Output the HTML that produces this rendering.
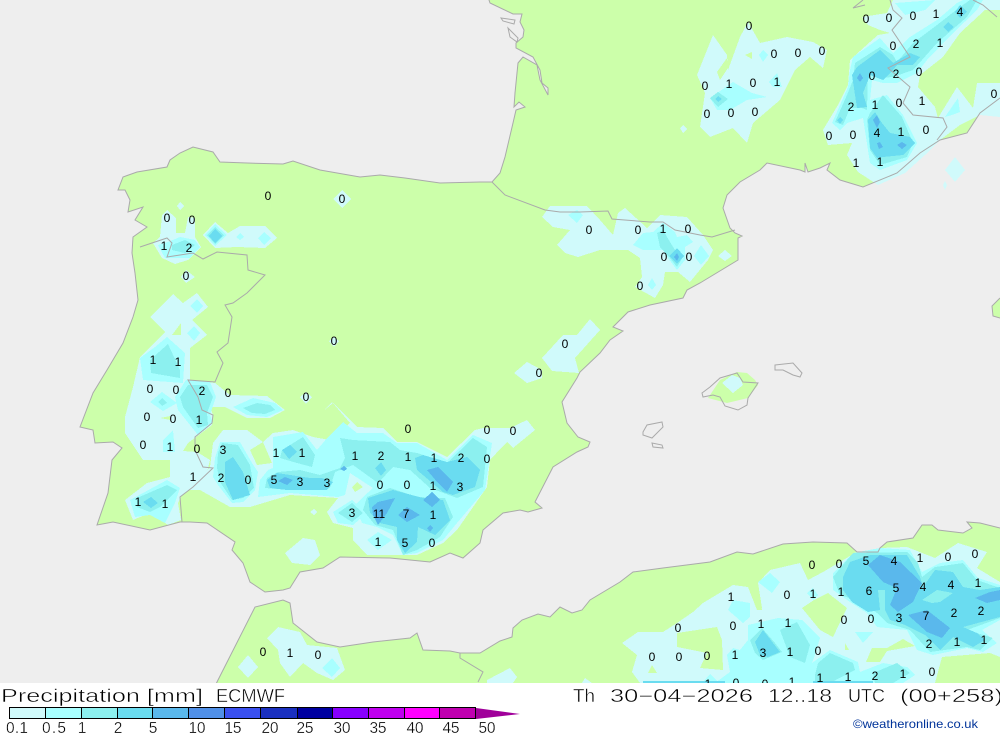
<!DOCTYPE html>
<html><head><meta charset="utf-8"><title>Precipitation</title>
<style>
html,body{margin:0;padding:0;background:#fff;width:1000px;height:733px;overflow:hidden}
svg{display:block}
.a{fill:#d0fafb}.b{fill:#a8ffff}.c{fill:#8cf0ef}.d{fill:#6adcf0}.e{fill:#5ab8ec}.f{fill:#5090e8}.g{fill:#ccffaa}
.n text{font:12px "Liberation Sans",sans-serif;fill:#000;text-anchor:middle}
.t{font-family:"Liberation Sans",sans-serif;font-size:18px;fill:#000;stroke:#fff;stroke-width:.45}
.l{font-family:"Liberation Sans",sans-serif;font-size:15.5px;fill:#000;text-anchor:middle;stroke:#fff;stroke-width:.3}
.ln{fill:none;stroke:#aaa;stroke-width:1}
</style></head><body>
<svg width="1000" height="733" viewBox="0 0 1000 733" xmlns="http://www.w3.org/2000/svg">
<defs><path id="cst" d="M-5,-5L489,-5 489,0 490,3 513,14 522,14 520,22 524,30 523,37 516,43 516,48 533,57 540,70 542,83 548,88 548,95 540,80 537,65 523,57 518,63 515,93 514,107 519,102 525,107 516,110 513,123 505,157 500,173 492,182 480,182 440,183 405,178 380,175 360,177 320,170 293,161 283,164 247,163 220,162 213,152 193,147 180,153 170,160 167,167 137,172 123,177 118,190 125,190 130,200 128,212 143,207 135,220 147,227 133,237 132,253 135,273 138,300 133,317 123,343 107,370 93,393 80,427 93,430 95,443 113,442 122,448 112,460 108,493 97,525 113,522 150,530 180,522 190,522 207,523 235,542 232,550 243,563 250,582 265,592 283,590 290,588 300,572 323,568 340,557 390,558 430,562 450,553 463,558 480,543 483,530 503,513 520,510 528,512 542,508 535,502 553,467 577,452 588,447 590,442 578,437 567,423 562,402 577,378 580,372 600,353 610,340 623,331 613,327 628,312 650,305 683,298 687,290 700,283 738,260 738,238 742,236 735,233 730,228 723,208 727,195 740,182 760,170 767,163 800,170 805,172 805,163 808,172 820,168 830,163 827,170 840,180 863,187 897,173 920,153 940,140 967,133 980,113 1000,98 1005,98 1005,528 1000,528 980,523 967,522 972,528 963,533 938,530 932,525 922,525 913,538 887,542 880,548 878,552 857,552 847,543 813,542 783,544 753,554 737,552 710,562 663,568 633,572 620,582 590,600 582,610 572,613 560,607 550,617 538,614 522,620 513,628 512,637 500,641 480,653 460,653 450,651 423,650 417,633 410,638 373,642 340,647 317,642 293,623 290,603 283,600 255,607 218,680 213,690 -5,690Z"/></defs>
<rect width="1000" height="733" fill="#ccffaa"/>
<use href="#cst" fill="#eeeeee"/>
<polygon fill="#ccffaa" points="708,398 720,380 737,372 747,373 755,380 758,385 748,398 727,403"/>
<polygon fill="#ccffaa" points="1000,298 992,306 993,316 1000,318"/>
<g shape-rendering="crispEdges">
<g class="a">
<polygon points="162,215 167,210 176,218 176,233 185,233 188,217 195,218 195,237 201,247 188,260 175,264 162,258 153,243 160,237"/>
<polygon points="180,202 184,206 180,210 177,206"/>
<polygon points="215,222 228,233 240,226 265,226 277,238 265,248 237,247 215,248 203,235"/>
<polygon points="186,270 195,277 186,283 181,277"/>
<polygon points="342,190 351,199 342,208 333,199"/>
<polygon points="334,337 339,341 334,347 329,341"/>
<polygon points="306,392 312,397 306,404 300,397"/>
<polygon points="173,294 183,303 197,293 208,307 192,320 207,335 190,348 190,380 215,383 230,395 267,396 285,410 270,418 247,418 225,407 210,407 213,415 212,425 188,443 183,451 197,452 210,460 205,480 193,487 182,495 178,503 181,520 168,525 150,513 133,520 125,500 147,483 170,477 170,460 143,460 125,433 125,417 133,387 140,357 165,332 150,317"/>
<polygon points="322,412 333,403 357,427 383,428 397,442 417,442 447,457 475,430 483,428 510,428 527,420 535,430 513,448 507,442 502,447 490,460 487,487 457,530 443,543 417,555 367,555 353,540 353,528 333,523 327,512 338,498 290,495 250,507 230,507 200,490 190,490 210,467 213,443 223,430 247,430 263,442 273,433 293,430 313,437 330,440 350,423 332,402"/>
<polygon points="285,553 303,538 315,540 320,555 310,565 292,563"/>
<polygon points="310,512 314,509 317,512 314,515"/>
<polygon points="267,638 278,627 300,632 307,645 337,648 345,670 333,680 317,673 303,663 290,677 280,663 278,650"/>
<polygon points="248,655 258,667 248,678 238,667"/>
<polygon points="487,680 510,668 517,677 513,683 487,683"/>
<polygon points="582,683 585,678 592,683"/>
<polygon points="697,75 713,35 727,55 728,70 740,37 748,22 760,43 787,37 813,42 827,50 823,68 810,57 795,70 780,100 753,123 747,143 733,128 710,137 700,127 705,93"/>
<polygon points="680,128 683,125 687,129 683,133"/>
<polygon points="893,0 1000,0 1000,10 985,10 960,33 943,57 920,75 918,87 935,107 938,118 957,87 973,108 977,83 1000,83 1000,117 980,115 960,125 940,140 925,155 905,173 878,185 858,172 847,155 852,143 828,145 823,130 838,105 848,85 850,60 870,42 878,35 890,33 880,30 868,25 862,17 887,13"/>
<polygon points="945,170 955,157 965,170 955,182"/>
<polygon points="943,185 945,181 947,185 945,190"/>
<polygon points="542,217 550,206 587,206 600,220 613,235 618,213 625,208 647,228 660,215 687,217 703,235 713,250 708,260 690,282 678,272 665,272 663,285 655,298 635,287 642,277 640,258 628,250 600,250 578,257 565,253 557,245 570,230 553,227"/>
<polygon points="718,256 725,250 732,256 725,261"/>
<polygon points="542,358 563,335 577,335 590,319 600,330 575,358 579,373 552,371"/>
<polygon points="514,373 527,362 542,370 542,378 527,383"/>
<polygon points="722,383 732,375 740,378 743,385 733,393"/>
<polygon points="622,643 638,632 663,632 677,623 693,612 703,603 733,585 748,587 757,610 762,608 758,583 770,570 800,563 808,580 823,572 855,553 880,548 907,547 935,558 958,543 987,552 977,568 1000,582 1000,683 640,683 632,672 637,655"/>
</g>
<g class="g">
<polygon points="172,335 181,323 181,335"/>
<polygon points="160,418 170,416 170,420"/>
<polygon points="250,450 263,442 272,463 257,465"/>
<polygon points="352,487 357,482 363,487 355,492"/>
<polygon points="717,72 727,58 728,68 720,80"/>
<polygon points="745,55 752,52 752,59"/>
<polygon points="802,608 814,600 828,593 847,608 833,637 820,630"/>
<polygon points="677,633 717,627 722,640 723,670 700,668 707,653 677,647"/>
<polygon points="748,587 757,610 762,610 758,587"/>
<polygon points="866,662 872,648 887,648 903,639 915,646 887,651 880,662"/>
<polygon points="845,643 849,650 845,650"/>
<polygon points="648,673 652,665 657,673"/>
<polygon points="942,657 990,653 1000,657 1000,683 935,683"/>
<polygon points="977,568 987,552 1000,540 1000,582"/>
</g>
<g class="b">
<polygon points="168,242 180,237 195,240 200,247 190,258 165,258 158,245"/>
<polygon points="215,224 227,235 215,246 205,235"/>
<polygon points="264,232 271,238 264,245 258,238"/>
<polygon points="240,233 244,237 240,240 236,237"/>
<polygon points="197,299 203,306 197,313 190,306"/>
<polygon points="194,326 200,333 194,341 187,333"/>
<polygon points="140,358 143,380 183,383 185,353 167,337 155,347"/>
<polygon points="175,397 186,380 210,382 216,397 210,415 213,423 198,435 178,410"/>
<polygon points="150,402 162,392 177,403 163,411"/>
<polygon points="233,407 253,398 275,403 283,410 267,417 247,415"/>
<polygon points="163,440 173,430 175,452 163,452"/>
<polygon points="130,500 167,480 180,488 175,503 165,523 150,515 135,517"/>
<polygon points="215,458 220,442 240,442 252,463 258,472 255,490 243,502 232,503 218,485 213,477"/>
<polygon points="328,437 343,422 357,433 383,433 397,443 417,443 447,460 473,435 492,443 485,490 457,523 443,540 417,553 403,555 393,535 377,527 362,523 355,505 363,497 373,488 350,473 345,495 338,497 290,493 258,497 260,480 268,470 273,468 273,437 303,432 317,450"/>
<polygon points="333,512 352,500 367,513 353,525 338,523"/>
<polygon points="367,540 378,532 392,540 378,550"/>
<polygon points="332,658 340,668 332,677 322,668"/>
<polygon points="710,98 733,82 752,93 767,97 747,100 730,110 717,110"/>
<polygon points="759,55 763,50 768,55 763,62"/>
<polygon points="769,82 777,73 782,87 773,87"/>
<polygon points="853,57 880,38 893,53 910,37 937,20 957,3 963,0 983,0 977,10 953,33 927,60 917,73 897,83 883,83 872,80 870,100 887,95 903,115 917,143 907,160 880,170 870,163 863,118 847,123 840,130 832,123 848,87 850,70"/>
<polygon points="895,3 935,0 925,10 905,15"/>
<polygon points="945,117 958,98 960,112 952,115"/>
<polygon points="633,245 643,233 653,232 663,223 675,232 677,237 687,235 693,242 685,247 685,260 677,270 668,258 663,250 643,250"/>
<polygon points="568,215 577,210 583,215 577,223"/>
<polygon points="694,256 701,245 709,256 701,265"/>
<polygon points="648,285 652,278 656,285 652,290"/>
<polygon points="833,573 853,553 880,548 910,550 922,572 940,563 963,560 978,578 1000,585 1000,620 982,630 997,643 983,652 967,648 933,655 917,650 907,630 877,627 867,613 850,602 833,590"/>
<polygon points="748,625 778,618 802,620 820,638 815,655 812,663 830,650 858,662 860,672 883,663 907,667 915,675 903,683 715,683 730,672 727,655 733,648 740,650 748,640"/>
<polygon points="758,582 770,573 780,582 772,593"/>
<polygon points="807,593 813,588 818,595 813,600"/>
<polygon points="728,610 733,600 750,603 750,617 743,623"/>
<polygon points="855,632 873,632 863,643"/>
<polygon points="703,682 710,674 718,682"/>
</g>
<g class="c">
<polygon points="172,245 185,240 195,245 185,253 172,250"/>
<polygon points="215,227 224,235 215,244 207,235"/>
<polygon points="150,360 151,373 180,378 180,370 168,344"/>
<polygon points="180,397 188,385 207,385 213,397 207,413 208,425 198,428 183,407"/>
<polygon points="158,402 162,398 167,403 162,406"/>
<polygon points="243,408 257,403 270,405 275,410 265,414 252,413"/>
<polygon points="137,498 167,485 177,490 160,507 150,512 137,507"/>
<polygon points="218,453 222,443 238,445 250,465 254,488 243,498 232,500 220,482 217,468"/>
<polygon points="340,438 353,440 390,442 400,450 417,453 447,463 473,438 487,447 483,487 457,498 430,488 410,470 393,467 378,483 353,465 335,472 330,488 290,490 265,488 267,478 278,472 300,470 320,475 340,468 345,458"/>
<polygon points="282,450 303,437 315,455 312,467 297,463 280,458"/>
<polygon points="367,497 390,488 417,497 445,498 453,517 440,537 417,550 403,555 393,530 375,525 363,510"/>
<polygon points="338,513 352,503 363,513 352,522"/>
<polygon points="710,98 718,92 728,99 718,107"/>
<polygon points="855,63 880,47 893,55 897,62 913,43 937,25 960,7 970,0 977,0 967,17 937,43 922,60 913,70 893,77 880,78 868,73 867,110 862,108 850,108 843,125 835,122 847,95 853,80"/>
<polygon points="870,113 883,95 902,117 913,143 907,157 880,165 870,150 867,120"/>
<polygon points="657,233 663,230 670,242 675,250 683,257 677,267 670,258 660,247"/>
<polygon points="833,577 847,560 853,553 907,552 918,563 922,577 935,567 963,563 977,580 1000,588 1000,618 967,630 993,638 980,650 967,647 930,652 910,630 887,623 877,613 862,602 840,595"/>
<polygon points="780,630 797,622 810,645 805,663 790,657"/>
<polygon points="750,640 762,628 775,643 782,652 763,660 755,653"/>
<polygon points="818,663 830,653 853,663 855,670 830,683 815,683 815,675"/>
<polygon points="873,673 897,663 910,673 893,683 875,683"/>
</g>
<g class="d">
<polygon points="143,502 151,497 158,503 151,508"/>
<polygon points="215,229 222,236 215,243 209,236"/>
<polygon points="225,462 233,457 243,472 250,495 233,500 225,482"/>
<polygon points="415,458 423,455 447,462 467,457 480,470 475,487 453,495 443,492 417,470"/>
<polygon points="368,498 393,490 423,498 443,500 450,520 435,535 418,527 417,542 405,553 397,540 397,527 380,523 370,513"/>
<polygon points="267,480 277,473 310,478 322,478 333,482 327,490 287,490 270,488"/>
<polygon points="282,450 290,445 297,452 289,459"/>
<polygon points="375,468 381,462 386,470 381,476"/>
<polygon points="715,99 718,96 722,99 718,102"/>
<polygon points="857,67 880,50 893,63 910,53 920,57 913,65 897,65 893,70 883,80 870,75 863,93 867,107 857,108 855,95 852,75"/>
<polygon points="868,120 875,112 882,123 890,133 910,137 915,143 903,155 883,157 877,158 870,148"/>
<polygon points="837,120 840,117 843,120 840,124"/>
<polygon points="943,27 948,22 954,27 948,32"/>
<polygon points="955,12 960,5 967,12 960,18"/>
<polygon points="669,256 677,248 684,256 677,264"/>
<polygon points="843,577 850,562 870,555 907,555 920,577 923,587 935,570 953,572 963,587 980,590 1000,587 1000,617 963,627 977,633 985,640 973,647 953,637 940,650 925,635 905,625 890,620 885,610 885,590 878,590 880,610 868,612 852,602 843,590"/>
<polygon points="755,642 763,630 780,652 768,657 760,655"/>
<rect x="643" y="681" width="82" height="2"/>
<rect x="813" y="681" width="60" height="2"/>
</g>
<polygon class="c" points="922,600 937,590 953,593 940,602 932,603"/>
<g class="e">
<polygon points="285,477 293,480 287,485 278,481"/>
<polygon points="427,470 438,467 453,482 447,492 438,483"/>
<polygon points="423,500 432,492 440,500 432,507"/>
<polygon points="372,507 378,502 395,498 387,513 378,525 373,515"/>
<polygon points="398,515 407,507 420,515 407,522"/>
<polygon points="430,525 433,528 430,532 427,528"/>
<polygon points="340,469 344,466 347,469 344,471"/>
<polygon points="674,257 677,253 679,257 677,261"/>
<polygon points="857,78 860,73 863,78 860,82"/>
<polygon points="873,120 877,115 880,122 877,128"/>
<polygon points="877,143 880,142 883,147 879,149"/>
<polygon points="897,145 902,142 907,145 902,149"/>
<polygon points="868,565 880,555 900,562 922,583 913,602 898,612 890,605 897,588 883,582"/>
<polygon points="908,615 927,610 950,628 942,638 927,632"/>
<polygon points="975,598 990,592 1000,590 1000,600 987,603"/>
</g>
</g>
<use href="#cst" class="ln"/>
<g class="ln">
<polyline points="140,247 167,238 172,243 167,257 193,253 203,259 217,252 247,255 248,270 265,275 247,293 233,303 225,305 232,317 228,343 217,352 223,363 215,382 188,380 198,397 202,410 213,415 212,423 195,437 195,450 203,467 213,468 193,487 180,497 182,522"/>
<polyline points="492,182 505,195 545,210 560,212 580,212 608,211 612,219 650,222 663,222 675,230 700,235 712,237 735,230"/>
<polyline points="890,0 893,10 902,18 892,30 910,57 888,68 910,87 903,103 913,115 943,118 947,127 937,140"/>
<polyline points="973,0 983,5 997,17"/>
<polyline points="863,0 853,8 865,5"/>
<polyline points="460,653 460,658 483,672 478,682"/>
<polygon points="702,393 710,387 720,378 737,373 743,382 758,383 748,398 747,405 738,410 725,406 720,397 713,395 703,397"/>
<polygon points="775,365 793,363 802,373 800,377 793,375 783,370 775,370"/>
<polygon points="643,432 647,425 662,422 663,427 652,438 643,435"/>
<polygon points="652,443 662,445 663,448 653,447"/>
<polygon points="501,18 515,20 514,24 503,21"/>
<polygon points="508,28 518,38 517,42 510,37"/>
<polyline points="1000,298 992,306 993,316 1000,318"/>
</g>
<g class="n">
<text x="749" y="30">0</text><text x="774" y="58">0</text><text x="798" y="57">0</text><text x="822" y="55">0</text><text x="705" y="90">0</text><text x="729" y="88">1</text><text x="753" y="87">0</text><text x="777" y="86">1</text><text x="707" y="118">0</text><text x="731" y="117">0</text><text x="755" y="116">0</text>
<text x="866" y="23">0</text><text x="889" y="22">0</text><text x="913" y="20">0</text><text x="936" y="18">1</text><text x="960" y="16">4</text><text x="893" y="50">0</text><text x="916" y="48">2</text><text x="940" y="47">1</text><text x="872" y="80">0</text><text x="896" y="78">2</text><text x="919" y="76">0</text><text x="994" y="98">0</text><text x="851" y="111">2</text><text x="875" y="109">1</text><text x="899" y="107">0</text><text x="922" y="105">1</text><text x="829" y="140">0</text><text x="853" y="139">0</text><text x="877" y="137">4</text><text x="901" y="136">1</text><text x="926" y="134">0</text><text x="856" y="167">1</text><text x="880" y="166">1</text>
<text x="268" y="200">0</text><text x="342" y="203">0</text><text x="167" y="222">0</text><text x="192" y="224">0</text><text x="164" y="250">1</text><text x="189" y="252">2</text><text x="186" y="280">0</text><text x="334" y="345">0</text><text x="153" y="364">1</text><text x="178" y="366">1</text><text x="150" y="393">0</text><text x="176" y="394">0</text><text x="202" y="395">2</text><text x="228" y="397">0</text><text x="306" y="401">0</text><text x="147" y="421">0</text><text x="173" y="423">0</text><text x="199" y="424">1</text><text x="143" y="449">0</text><text x="170" y="451">1</text><text x="197" y="453">0</text><text x="223" y="454">3</text><text x="276" y="457">1</text><text x="302" y="457">1</text><text x="408" y="433">0</text><text x="487" y="434">0</text><text x="513" y="435">0</text><text x="355" y="460">1</text><text x="381" y="460">2</text><text x="408" y="461">1</text><text x="434" y="462">1</text><text x="461" y="462">2</text><text x="487" y="463">0</text><text x="193" y="481">1</text><text x="221" y="482">2</text><text x="248" y="484">0</text><text x="274" y="484">5</text><text x="300" y="486">3</text><text x="327" y="487">3</text><text x="380" y="489">0</text><text x="407" y="489">0</text><text x="433" y="490">1</text><text x="460" y="491">3</text><text x="138" y="506">1</text><text x="165" y="508">1</text><text x="352" y="517">3</text><text x="379" y="518">11</text><text x="406" y="518">7</text><text x="433" y="519">1</text><text x="378" y="546">1</text><text x="405" y="547">5</text><text x="432" y="547">0</text>
<text x="589" y="234">0</text><text x="638" y="234">0</text><text x="663" y="233">1</text><text x="688" y="233">0</text><text x="664" y="261">0</text><text x="689" y="261">0</text><text x="640" y="290">0</text><text x="565" y="348">0</text><text x="539" y="377">0</text>
<text x="263" y="656">0</text><text x="290" y="657">1</text><text x="318" y="659">0</text>
<text x="812" y="569">0</text><text x="839" y="568">0</text><text x="866" y="565">5</text><text x="894" y="565">4</text><text x="920" y="562">1</text><text x="948" y="561">0</text><text x="975" y="558">0</text><text x="731" y="601">1</text><text x="787" y="599">0</text><text x="813" y="598">1</text><text x="841" y="596">1</text><text x="869" y="595">6</text><text x="896" y="592">5</text><text x="923" y="591">4</text><text x="951" y="589">4</text><text x="978" y="587">1</text><text x="678" y="632">0</text><text x="733" y="630">0</text><text x="761" y="628">1</text><text x="788" y="627">1</text><text x="844" y="624">0</text><text x="871" y="623">0</text><text x="899" y="622">3</text><text x="926" y="620">7</text><text x="954" y="617">2</text><text x="981" y="615">2</text><text x="763" y="657">3</text><text x="735" y="659">1</text><text x="790" y="656">1</text><text x="818" y="655">0</text><text x="929" y="648">2</text><text x="957" y="646">1</text><text x="984" y="644">1</text><text x="652" y="661">0</text><text x="679" y="661">0</text><text x="707" y="660">0</text><text x="820" y="682">1</text><text x="848" y="681">1</text><text x="875" y="680">2</text><text x="903" y="678">1</text><text x="932" y="676">0</text><text x="708" y="688">1</text><text x="736" y="687">0</text><text x="765" y="688">0</text><text x="792" y="686">1</text>
</g>
<rect x="0" y="683" width="1000" height="50" fill="#fff"/>
<text class="t" x="1" y="702" textLength="202" lengthAdjust="spacingAndGlyphs">Precipitation [mm]</text>
<text class="t" x="216" y="702" textLength="69" lengthAdjust="spacingAndGlyphs">ECMWF</text>
<text class="t" x="573" y="702" textLength="22" lengthAdjust="spacingAndGlyphs">Th</text>
<text class="t" x="610" y="702" textLength="143" lengthAdjust="spacingAndGlyphs">30−04−2026</text>
<text class="t" x="768" y="702" textLength="64" lengthAdjust="spacingAndGlyphs">12..18</text>
<text class="t" x="848" y="702" textLength="37" lengthAdjust="spacingAndGlyphs">UTC</text>
<text class="t" x="900" y="702" textLength="103" lengthAdjust="spacingAndGlyphs">(00+258)</text>
<g stroke="#000" stroke-width="1" shape-rendering="crispEdges">
<rect x="9.5" y="707.5" width="36" height="11" fill="#d0fafb"/>
<rect x="45.5" y="707.5" width="36" height="11" fill="#a8ffff"/>
<rect x="81.5" y="707.5" width="36" height="11" fill="#8cf0ef"/>
<rect x="117.5" y="707.5" width="35" height="11" fill="#6adcf0"/>
<rect x="152.5" y="707.5" width="36" height="11" fill="#5ab8ec"/>
<rect x="188.5" y="707.5" width="36" height="11" fill="#5090e8"/>
<rect x="224.5" y="707.5" width="36" height="11" fill="#3a50f0"/>
<rect x="260.5" y="707.5" width="37" height="11" fill="#1a30c0"/>
<rect x="297.5" y="707.5" width="35" height="11" fill="#0000a0"/>
<rect x="332.5" y="707.5" width="36" height="11" fill="#8800ff"/>
<rect x="368.5" y="707.5" width="36" height="11" fill="#c000f0"/>
<rect x="404.5" y="707.5" width="35" height="11" fill="#ff00ff"/>
<rect x="439.5" y="707.5" width="36" height="11" fill="#c000b0"/>
</g>
<polygon points="476,708 520,714 476,719" fill="#a0009a"/>
<text class="l" x="6" y="733" textLength="22" lengthAdjust="spacing" style="text-anchor:start">0.1</text>
<text class="l" x="42" y="733" textLength="24" lengthAdjust="spacing" style="text-anchor:start">0.5</text>
<text class="l" x="82" y="733">1</text><text class="l" x="118" y="733">2</text><text class="l" x="153" y="733">5</text>
<text class="l" x="197" y="733" textLength="17">10</text><text class="l" x="233" y="733" textLength="17">15</text><text class="l" x="270" y="733" textLength="17">20</text><text class="l" x="305" y="733" textLength="17">25</text><text class="l" x="342" y="733" textLength="17">30</text><text class="l" x="378" y="733" textLength="17">35</text><text class="l" x="415" y="733" textLength="17">40</text><text class="l" x="451" y="733" textLength="17">45</text><text class="l" x="487" y="733" textLength="17">50</text>
<text x="853" y="728" font-family="'Liberation Sans',sans-serif" font-size="12" fill="#003399" textLength="125" lengthAdjust="spacingAndGlyphs">©weatheronline.co.uk</text>
</svg>
</body></html>
